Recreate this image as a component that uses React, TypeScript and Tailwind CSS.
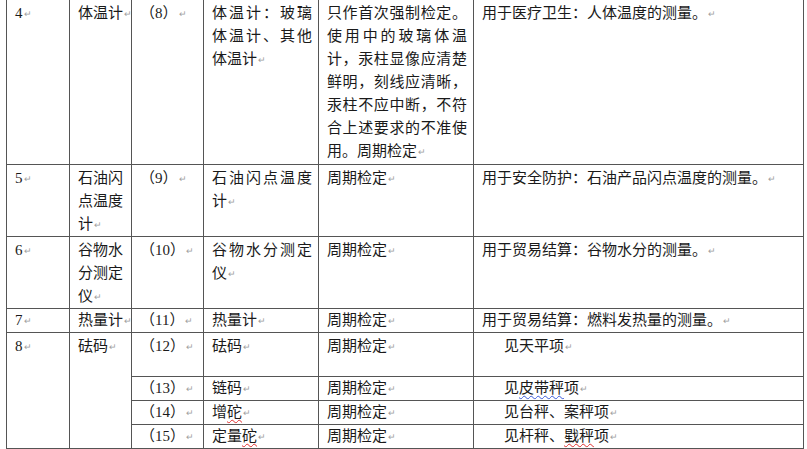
const font = { fontFamily: '"Liberation Serif", "Noto Sans CJK SC", serif' };

function Mark() {
  return <span className="ml-px align-middle text-[9px] leading-none text-[#a0a0a0]">↵</span>;
}

function Wavy({ children, color }: { children: React.ReactNode; color: string }) {
  return (
    <span className={`underline decoration-wavy decoration-1 underline-offset-2 ${color}`}>{children}</span>
  );
}

// each entry is one line of text; j = stretch across the cell like Word's justify
type Line = { t: React.ReactNode; j?: boolean };

function Lines({ lines }: { lines: Line[] }) {
  return (
    <>
      {lines.map((l, i) => (
        <div
          key={i}
          className={
            l.j
              ? "h-[23px] text-justify [text-align-last:justify]"
              : "h-[23px] whitespace-nowrap"
          }
        >
          {l.t}
          {i === lines.length - 1 && <Mark />}
        </div>
      ))}
    </>
  );
}

// tall rows keep 2px above the text, one-line rows sit flush
const td = "border border-[#555] align-top pt-[2px] pl-[8px] pr-[6px]";
const tdTop = "border-x border-b border-t-0 border-[#555] align-top pt-[2px] pl-[8px] pr-[6px]";
const tdLow = "border border-[#555] align-top pt-0 pl-[8px] pr-[6px]";

export default function App() {
  return (
    <main className="h-[449px] w-[807px] overflow-hidden bg-white" style={font}>
      <table className="ml-[6px] w-[797px] table-fixed border-collapse text-[15px] leading-[23px] text-[#1a1a1a]">
        <colgroup>
          <col className="w-[63px]" />
          <col className="w-[62px]" />
          <col className="w-[72px]" />
          <col className="w-[115px]" />
          <col className="w-[155px]" />
          <col className="w-[330px]" />
        </colgroup>
        <tbody>
          <tr className="h-[164px]">
            <td className={tdTop}><Lines lines={[{ t: "4" }]} /></td>
            <td className={tdTop}><Lines lines={[{ t: "体温计" }]} /></td>
            <td className={tdTop}><Lines lines={[{ t: "（8）" }]} /></td>
            <td className={tdTop}>
              <Lines lines={[{ t: "体温计：玻璃", j: true }, { t: "体温计、其他", j: true }, { t: "体温计" }]} />
            </td>
            <td className={tdTop}>
              <Lines
                lines={[
                  { t: "只作首次强制检定。", j: true },
                  { t: "使用中的玻璃体温", j: true },
                  { t: "计，汞柱显像应清楚", j: true },
                  { t: "鲜明，刻线应清晰，", j: true },
                  { t: "汞柱不应中断，不符", j: true },
                  { t: "合上述要求的不准使", j: true },
                  { t: "用。周期检定" },
                ]}
              />
            </td>
            <td className={tdTop}><Lines lines={[{ t: "用于医疗卫生：人体温度的测量。" }]} /></td>
          </tr>

          <tr className="h-[72px]">
            <td className={td}><Lines lines={[{ t: "5" }]} /></td>
            <td className={td}><Lines lines={[{ t: "石油闪" }, { t: "点温度" }, { t: "计" }]} /></td>
            <td className={td}><Lines lines={[{ t: "（9）" }]} /></td>
            <td className={td}><Lines lines={[{ t: "石油闪点温度", j: true }, { t: "计" }]} /></td>
            <td className={td}><Lines lines={[{ t: "周期检定" }]} /></td>
            <td className={td}><Lines lines={[{ t: "用于安全防护：石油产品闪点温度的测量。" }]} /></td>
          </tr>

          <tr className="h-[71px]">
            <td className={td}><Lines lines={[{ t: "6" }]} /></td>
            <td className={td}><Lines lines={[{ t: "谷物水" }, { t: "分测定" }, { t: "仪" }]} /></td>
            <td className={td}><Lines lines={[{ t: "（10）" }]} /></td>
            <td className={td}><Lines lines={[{ t: "谷物水分测定", j: true }, { t: "仪" }]} /></td>
            <td className={td}><Lines lines={[{ t: "周期检定" }]} /></td>
            <td className={td}><Lines lines={[{ t: "用于贸易结算：谷物水分的测量。" }]} /></td>
          </tr>

          <tr className="h-[24px]">
            <td className={tdLow}><Lines lines={[{ t: "7" }]} /></td>
            <td className={tdLow}><Lines lines={[{ t: "热量计" }]} /></td>
            <td className={tdLow}><Lines lines={[{ t: "（11）" }]} /></td>
            <td className={tdLow}><Lines lines={[{ t: "热量计" }]} /></td>
            <td className={tdLow}><Lines lines={[{ t: "周期检定" }]} /></td>
            <td className={tdLow}><Lines lines={[{ t: "用于贸易结算：燃料发热量的测量。" }]} /></td>
          </tr>

          <tr className="h-[44px]">
            <td rowSpan={4} className={td}><Lines lines={[{ t: "8" }]} /></td>
            <td rowSpan={4} className={td}><Lines lines={[{ t: "砝码" }]} /></td>
            <td className={td}><Lines lines={[{ t: "（12）" }]} /></td>
            <td className={td}><Lines lines={[{ t: "砝码" }]} /></td>
            <td className={td}><Lines lines={[{ t: "周期检定" }]} /></td>
            <td className={`${td} pl-[30px]`}><Lines lines={[{ t: "见天平项" }]} /></td>
          </tr>
          <tr className="h-[24px]">
            <td className={tdLow}><Lines lines={[{ t: "（13）" }]} /></td>
            <td className={tdLow}><Lines lines={[{ t: "链码" }]} /></td>
            <td className={tdLow}><Lines lines={[{ t: "周期检定" }]} /></td>
            <td className={`${tdLow} pl-[30px]`}>
              <Lines lines={[{ t: <>见<Wavy color="decoration-[#3b5bdb]">皮带秤</Wavy>项</> }]} />
            </td>
          </tr>
          <tr className="h-[24px]">
            <td className={tdLow}><Lines lines={[{ t: "（14）" }]} /></td>
            <td className={tdLow}>
              <Lines lines={[{ t: <>增<Wavy color="decoration-[#e03131]">砣</Wavy></> }]} />
            </td>
            <td className={tdLow}><Lines lines={[{ t: "周期检定" }]} /></td>
            <td className={`${tdLow} pl-[30px]`}><Lines lines={[{ t: "见台秤、案秤项" }]} /></td>
          </tr>
          <tr className="h-[24px]">
            <td className={tdLow}><Lines lines={[{ t: "（15）" }]} /></td>
            <td className={tdLow}>
              <Lines lines={[{ t: <>定量<Wavy color="decoration-[#e03131]">砣</Wavy></> }]} />
            </td>
            <td className={tdLow}><Lines lines={[{ t: "周期检定" }]} /></td>
            <td className={`${tdLow} pl-[30px]`}>
              <Lines lines={[{ t: <>见杆秤、<Wavy color="decoration-[#e03131]">戥秤</Wavy>项</> }]} />
            </td>
          </tr>
        </tbody>
      </table>
    </main>
  );
}
